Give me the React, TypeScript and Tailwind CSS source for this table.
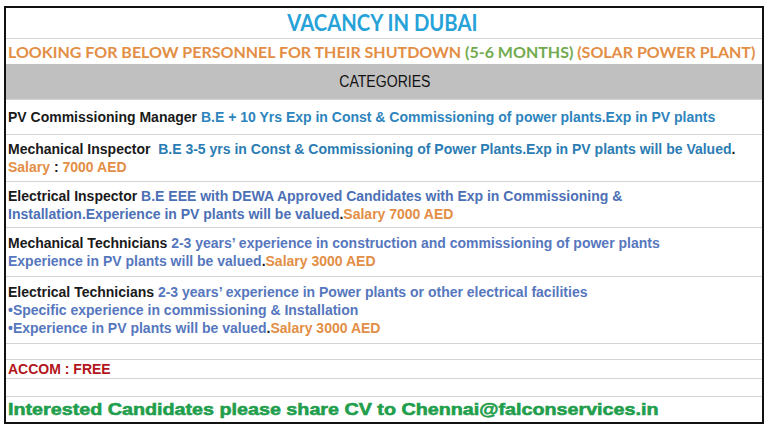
const arial = { fontFamily: '"Liberation Sans", Arial, sans-serif' };

function Row({
  h,
  children,
  className = "",
  last = false,
}: {
  h: string;
  children?: React.ReactNode;
  className?: string;
  last?: boolean;
}) {
  return (
    <div
      className={`${h} flex flex-col justify-center pl-[2px] ${
        last ? "" : "border-b border-[#d4d4d4]"
      } ${className}`}
    >
      {children}
    </div>
  );
}

const Dark = ({ children }: { children: React.ReactNode }) => (
  <span className="text-[#1a1a1a]">{children}</span>
);
const Sal = ({ children }: { children: React.ReactNode }) => (
  <span className="text-[#e38e45]">{children}</span>
);

export default function App() {
  return (
    <div className="h-[424px] w-[768px] overflow-hidden bg-white pt-[6px] pl-[4px]">
      <div className="w-[760px] border-2 border-[#111]">
        <Row h="h-[31px]" className="items-center pr-[6px]">
          <span className="inline-block scale-x-[0.92] font-['Lato',sans-serif] text-[22px] leading-none font-bold text-[#27a2d8]">
            VACANCY IN DUBAI
          </span>
        </Row>
        <Row h="h-[25px]" last>
          <div className="font-['Lato',sans-serif] text-[16px] leading-none font-bold whitespace-nowrap text-[#e38e45]">
            LOOKING FOR BELOW PERSONNEL FOR THEIR SHUTDOWN{" "}
            <span className="text-[#72ab4e]">(5-6 MONTHS)</span> (SOLAR POWER PLANT)
          </div>
        </Row>
        <Row h="h-[36px]" className="items-center bg-[#c0c0c0]">
          <span
            style={arial}
            className="inline-block scale-x-[0.88] text-[16px] leading-none text-[#111]"
          >
            CATEGORIES
          </span>
        </Row>

        <div style={arial} className="text-[14px] leading-[18px] font-bold">
          <Row h="h-[35px]">
            <div className="whitespace-nowrap">
              <Dark>PV Commissioning Manager</Dark>{" "}
              <span className="text-[#2d84bd]">
                B.E + 10 Yrs Exp in Const &amp; Commissioning of power plants.Exp in PV plants
              </span>
            </div>
          </Row>
          <Row h="h-[47px]">
            <div className="whitespace-nowrap">
              <Dark>Mechanical Inspector</Dark>&nbsp;{" "}
              <span className="text-[#2b7cb3]">
                B.E 3-5 yrs in Const &amp; Commissioning of Power Plants.Exp in PV plants will be Valued
              </span>
              <Dark>.</Dark>
            </div>
            <div>
              <Sal>Salary</Sal> <Dark>:</Dark> <Sal>7000 AED</Sal>
            </div>
          </Row>
          <Row h="h-[46px]">
            <div className="whitespace-nowrap">
              <Dark>Electrical Inspector</Dark>{" "}
              <span className="text-[#4c70b6]">
                B.E EEE with DEWA Approved Candidates with Exp in Commissioning &amp;
              </span>
            </div>
            <div className="whitespace-nowrap">
              <span className="text-[#4c70b6]">
                Installation.Experience in PV plants will be valued
              </span>
              <Dark>.</Dark>
              <Sal>Salary 7000 AED</Sal>
            </div>
          </Row>
          <Row h="h-[49px]">
            <div className="whitespace-nowrap">
              <Dark>Mechanical Technicians</Dark>{" "}
              <span className="text-[#5677bd]">
                2-3 years’ experience in construction and commissioning of power plants
              </span>
            </div>
            <div className="whitespace-nowrap">
              <span className="text-[#5677bd]">Experience in PV plants will be valued</span>
              <Dark>.</Dark>
              <Sal>Salary 3000 AED</Sal>
            </div>
          </Row>
          <Row h="h-[67px]">
            <div className="whitespace-nowrap">
              <Dark>Electrical Technicians</Dark>{" "}
              <span className="text-[#5677bd]">
                2-3 years’ experience in Power plants or other electrical facilities
              </span>
            </div>
            <div className="whitespace-nowrap text-[#5677bd]">
              •Specific experience in commissioning &amp; Installation
            </div>
            <div className="whitespace-nowrap">
              <span className="text-[#5677bd]">•Experience in PV plants will be valued</span>
              <Dark>.</Dark>
              <Sal>Salary 3000 AED</Sal>
            </div>
          </Row>
          <Row h="h-[16px]" />
          <Row h="h-[19px]">
            <div className="text-[#b3161c]">ACCOM : FREE</div>
          </Row>
          <Row h="h-[18px]" />
          <Row h="h-[25px]" last>
            <div className="origin-left scale-x-[1.16] text-[17px] whitespace-nowrap text-[#1f9e4c] [-webkit-text-stroke:0.6px_#1f9e4c]">
              Interested Candidates please share CV to Chennai@falconservices.in
            </div>
          </Row>
        </div>
      </div>
    </div>
  );
}
